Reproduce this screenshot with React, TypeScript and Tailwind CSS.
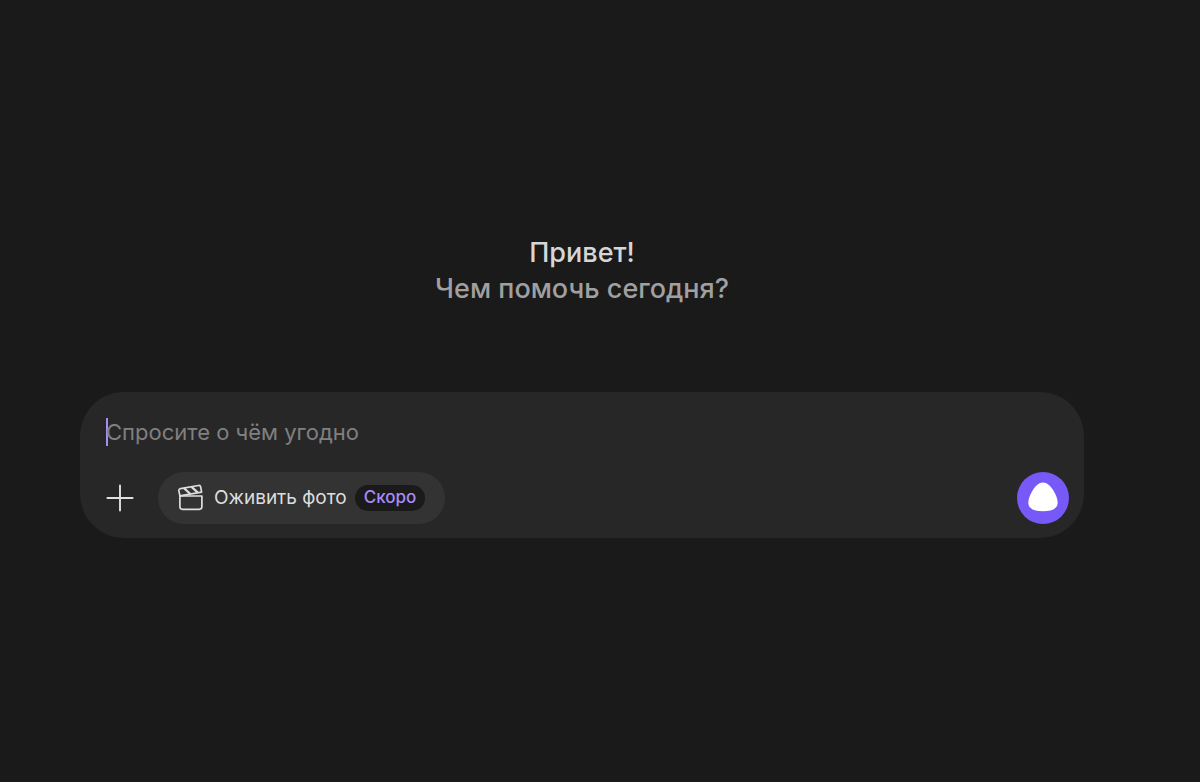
function ClapperIcon() {
  return (
    <svg className="h-7 w-7 shrink-0" viewBox="0 0 28 28" fill="none" stroke="currentColor" strokeWidth="1.7" strokeLinejoin="round" aria-hidden="true">
      <path d="M1.9 12H23.9V22.7Q23.9 25.3 21.3 25.3H4.5Q1.9 25.3 1.9 22.7Z" />
      <path d="M1.9 11.8L0.9 6.9Q0.6 5 2.5 4.6L20.4 1.5Q22.4 1.2 22.7 3.1L23.6 8.2Z" />
      <path d="M6 4.2L12.2 9.8M13.6 2.9L19.8 8.6" strokeWidth="2.2" />
    </svg>
  );
}

function PlusIcon() {
  return (
    <svg className="h-7 w-7" viewBox="0 0 28 28" fill="none" stroke="currentColor" strokeWidth="1.9" strokeLinecap="round" aria-hidden="true">
      <path d="M14 1.4V26.6M1.4 14H26.6" />
    </svg>
  );
}

function AssistantMark() {
  return (
    <svg className="h-[52px] w-[52px]" viewBox="0 0 52 52" fill="#fff" aria-hidden="true">
      <path d="M26 10.6C22.2 10.6 18.6 13.8 15.6 18.6C12.9 22.8 11.3 27.4 11.3 31C11.3 36.6 17 39.2 26 39.2C35 39.2 40.7 36.6 40.7 31C40.7 27.4 39.1 22.8 36.4 18.6C33.4 13.8 29.8 10.6 26 10.6Z" />
    </svg>
  );
}

export default function App() {
  return (
    <main className="min-h-screen bg-[#1a1a1a] pt-[235px] pr-[116px] pb-10 pl-20 font-['Inter','Liberation_Sans',sans-serif] antialiased">
      <h1 className="text-center text-[27px] leading-9 font-medium text-[#d6d6d6]">
        Привет!
        <span className="block text-[#a0a0a0]">Чем помочь сегодня?</span>
      </h1>

      <form className="mt-[85px] rounded-[44px] bg-[#272727] pt-[26px] pr-[15px] pb-[14px] pl-[14px]" onSubmit={(event) => event.preventDefault()}>
        <div className="flex h-7 items-center pl-3">
          <span className="h-7 w-0.5 shrink-0 bg-[#a78bfa]" aria-hidden="true" />
          <input
            type="text"
            aria-label="Сообщение"
            placeholder="Спросите о чём угодно"
            className="-ml-0.5 min-w-0 flex-1 bg-transparent text-[22px] leading-7 text-[#d6d6d6] caret-[#a78bfa] outline-none placeholder:text-[#808080]"
          />
        </div>
        <div className="mt-[26px] flex items-center">
          <button type="button" aria-label="Добавить" className="flex h-[52px] w-[52px] items-center justify-center text-[#e0e0e0]">
            <PlusIcon />
          </button>
          <button type="button" className="ml-3 flex h-[52px] items-center rounded-full bg-[#333333] px-5 text-[19px] text-[#dedede]">
            <ClapperIcon />
            <span className="ml-2">Оживить фото</span>
            <span className="ml-2 flex h-[26px] items-center rounded-full bg-[#1a1a1a] px-[9px] text-[17px] font-medium text-[#a78bfa]">Скоро</span>
          </button>
          <button type="button" aria-label="Голосовой помощник" className="ml-auto h-[52px] w-[52px] rounded-full bg-[#7759f8]">
            <AssistantMark />
          </button>
        </div>
      </form>
    </main>
  );
}
